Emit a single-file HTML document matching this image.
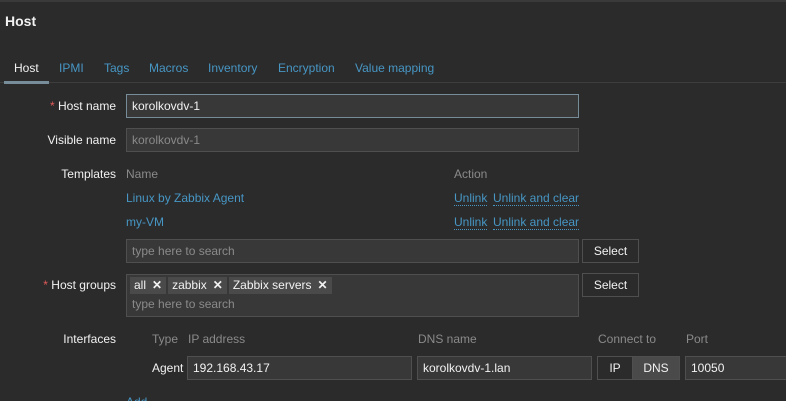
<!DOCTYPE html>
<html><head><meta charset="utf-8"><style>
*{box-sizing:border-box;margin:0;padding:0}
html,body{width:786px;height:401px;overflow:hidden}
body{background:#2b2b2b;font-family:"Liberation Sans",Arial,sans-serif;font-size:12px;color:#f2f2f2;position:relative}
.a{position:absolute;white-space:nowrap}
.lbl{position:absolute;right:670px;white-space:nowrap}
.req:before{content:"* ";color:#e45959}
.in{position:absolute;background:#383838;border:1px solid #4f4f4f;height:24px;padding:4px 5px;line-height:14px}
.ph{color:#8a8a8a}
.lnk{color:#4796c4}
.dot{border-bottom:1px dotted #4796c4}
.btn{position:absolute;background:#2b2b2b;border:1px solid #4f4f4f;height:24px;line-height:22px;text-align:center;color:#f2f2f2}
.gray{color:#8a8a8a}
.chip{display:inline-block;background:#4a4a4a;padding:0 4px;height:17px;line-height:17px;margin-right:2px}
.chip b{margin-left:6px;font-size:12px}
</style></head><body>
<div class="a" style="left:0;top:0;width:786px;height:2px;background:#3a3a3a"></div>
<div class="a" style="left:5px;top:13px;font-size:14px;font-weight:bold">Host</div>
<div class="a" style="left:0;top:82px;width:786px;height:1px;background:#3d3d3d"></div>
<div class="a" style="left:4px;top:81px;width:45px;height:3px;background:#768d99"></div>
<div class="a" style="left:14px;top:61px">Host</div>
<div class="a lnk" style="left:59px;top:61px">IPMI</div>
<div class="a lnk" style="left:104px;top:61px">Tags</div>
<div class="a lnk" style="left:149px;top:61px">Macros</div>
<div class="a lnk" style="left:208px;top:61px">Inventory</div>
<div class="a lnk" style="left:278px;top:61px">Encryption</div>
<div class="a lnk" style="left:355px;top:61px">Value mapping</div>

<div class="lbl req" style="top:99px">Host name</div>
<div class="in" style="left:126px;top:94px;width:453px;border-color:#768d99">korolkovdv-1</div>
<div class="lbl" style="top:133px">Visible name</div>
<div class="in gray" style="left:126px;top:128px;width:453px">korolkovdv-1</div>

<div class="lbl" style="top:167px">Templates</div>
<div class="a gray" style="left:126px;top:167px">Name</div>
<div class="a gray" style="left:454px;top:167px">Action</div>
<div class="a lnk" style="left:126px;top:191px">Linux by Zabbix Agent</div>
<div class="a lnk dot" style="left:454px;top:191px">Unlink</div>
<div class="a lnk dot" style="left:493px;top:191px">Unlink and clear</div>
<div class="a lnk" style="left:126px;top:215px">my-VM</div>
<div class="a lnk dot" style="left:454px;top:215px">Unlink</div>
<div class="a lnk dot" style="left:493px;top:215px">Unlink and clear</div>
<div class="in ph" style="left:126px;top:239px;width:453px">type here to search</div>
<div class="btn" style="left:582px;top:239px;width:57px">Select</div>

<div class="lbl req" style="top:278px">Host groups</div>
<div class="in" style="left:126px;top:274px;width:453px;height:43px;padding:2px 3px">
<div><span class="chip">all<b>✕</b></span><span class="chip">zabbix<b>✕</b></span><span class="chip">Zabbix servers<b>✕</b></span></div>
<div class="ph" style="padding:3px 2px 0">type here to search</div></div>
<div class="btn" style="left:582px;top:273px;width:57px">Select</div>

<div class="lbl" style="top:332px">Interfaces</div>
<div class="a gray" style="left:152px;top:332px">Type</div>
<div class="a gray" style="left:188px;top:332px">IP address</div>
<div class="a gray" style="left:418px;top:332px">DNS name</div>
<div class="a gray" style="left:598px;top:332px">Connect to</div>
<div class="a gray" style="left:686px;top:332px">Port</div>
<div class="a" style="left:152px;top:361px">Agent</div>
<div class="in" style="left:187px;top:356px;width:225px">192.168.43.17</div>
<div class="in" style="left:417px;top:356px;width:175px">korolkovdv-1.lan</div>
<div class="btn" style="left:597px;top:356px;width:36px">IP</div>
<div class="btn" style="left:632px;top:356px;width:48px;background:#4a4a4a">DNS</div>
<div class="in" style="left:685px;top:356px;width:105px">10050</div>
<div class="a lnk" style="left:126px;top:395px">Add</div>
</body></html>
